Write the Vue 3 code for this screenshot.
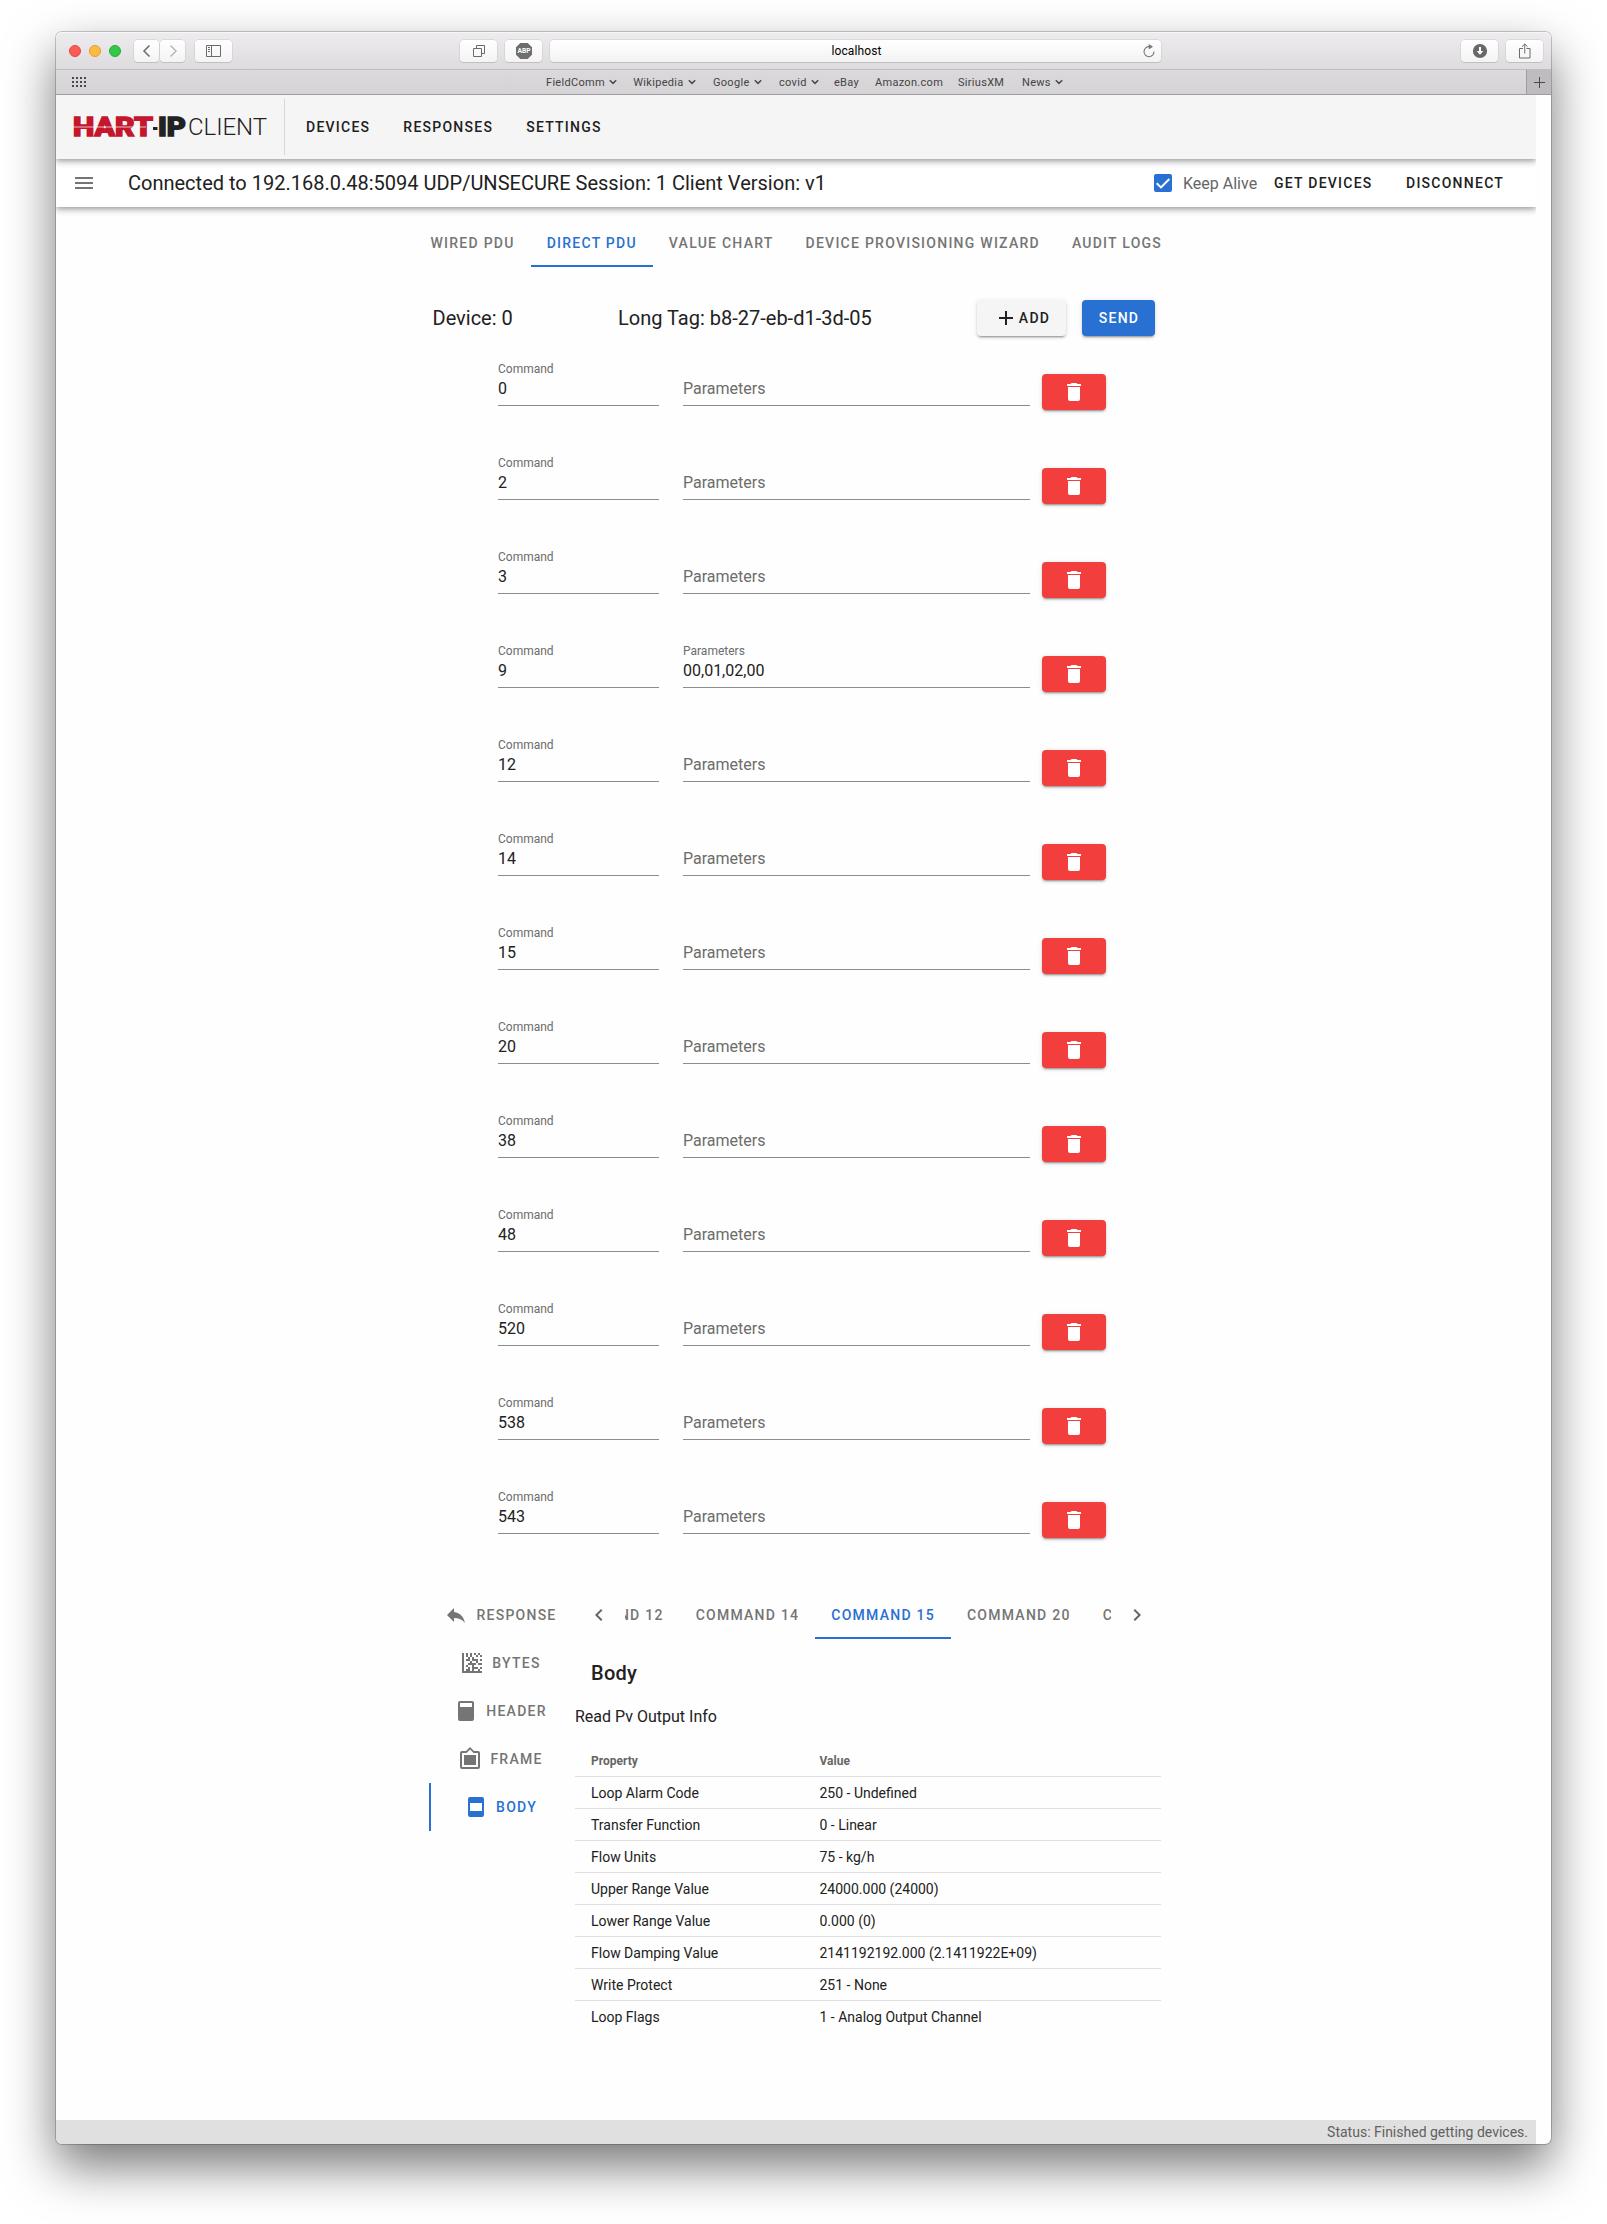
<script setup>
const bookmarks = [
  { label: 'FieldComm', menu: true, w: 87.3 },
  { label: 'Wikipedia', menu: true, w: 79.7 },
  { label: 'Google', menu: true, w: 66 },
  { label: 'covid', menu: true, w: 55 },
  { label: 'eBay', menu: false, w: 41 },
  { label: 'Amazon.com', menu: false, w: 83 },
  { label: 'SiriusXM', menu: false, w: 64 },
  { label: 'News', menu: true, w: 42 },
]
const tabs = ['Wired PDU', 'Direct PDU', 'Value Chart', 'Device Provisioning Wizard', 'Audit Logs']
const rows = [
  ['0', ''], ['2', ''], ['3', ''], ['9', '00,01,02,00'], ['12', ''], ['14', ''], ['15', ''],
  ['20', ''], ['38', ''], ['48', ''], ['520', ''], ['538', ''], ['543', ''],
]
const sections = [
  { label: 'Response', d: 'M10 9V5L3 12l7 7v-4.100c5 0 8.500 1.600 11 5.100-1-5-4-10-11-11z' },
  { label: 'Bytes', d: 'M2 2h2v18h18v2H2zM6 2h2v4H6zM10 2h2v4h-2zM14 2h2v2h-2zM16 4h2v2h-2zM18 2h2v2h-2zM20 4h2v2h-2zM6 8h4v2H6zM8 6h2v2H8zM12 6h2v4h-2zM14 8h4v2h-4zM20 8h2v2h-2zM10 10h2v4h-2zM6 14h2v2H6zM8 12h2v2H8zM12 12h4v2h-4zM16 10h2v2h-2zM18 12h4v2h-4zM6 18h4v2H6zM8 16h2v2H8zM12 14h2v6h-2zM14 16h4v2h-4zM18 18h2v2h-2zM20 16h2v2h-2z' },
  { label: 'Header', d: 'M6 2h12a2 2 0 0 1 2 2v16a2 2 0 0 1-2 2H6a2 2 0 0 1-2-2V4a2 2 0 0 1 2-2M6 4v4h12V4z' },
  { label: 'Frame', d: 'M18 8H6v10h12M20 20H4V6h4.500L12.040 2.500 15.500 6H20M20 4h-4l-4-4-4 4H4a2 2 0 0 0-2 2v14a2 2 0 0 0 2 2h16a2 2 0 0 0 2-2V6a2 2 0 0 0-2-2z' },
  { label: 'Body', d: 'M6 2h12a2 2 0 0 1 2 2v16a2 2 0 0 1-2 2H6a2 2 0 0 1-2-2V4a2 2 0 0 1 2-2M6 8v8h12V8z' },
]
const commands = ['Command 12', 'Command 14', 'Command 15', 'Command 20', 'Command 38']
const properties = [
  ['Loop Alarm Code', '250 - Undefined'],
  ['Transfer Function', '0 - Linear'],
  ['Flow Units', '75 - kg/h'],
  ['Upper Range Value', '24000.000 (24000)'],
  ['Lower Range Value', '0.000 (0)'],
  ['Flow Damping Value', '2141192192.000 (2.1411922E+09)'],
  ['Write Protect', '251 - None'],
  ['Loop Flags', '1 - Analog Output Channel'],
]
</script>

<template>
  <div class="desktop">
    <div class="window">
      <div class="titlebar">
        <i class="light red"></i><i class="light yellow"></i><i class="light green"></i>
        <div class="nav">
          <span class="tb"><svg width="26" height="22" viewBox="0 0 26 22"><path d="M15.500 5.500L10 11l5.500 5.500" fill="none" stroke="#6b6b6b" stroke-width="1.500" /></svg></span>
          <span class="tb"><svg width="26" height="22" viewBox="0 0 26 22"><path d="M10.500 5.500L16 11l-5.500 5.500" fill="none" stroke="#b9b9b9" stroke-width="1.500" /></svg></span>
        </div>
        <span class="tb wide side">
          <svg width="16" height="12" viewBox="0 0 16 12" fill="none" stroke="#6b6b6b"><path d="M.5.500h14v11H.500zM5.500.500v11M2 2.500h2M2 4.500h2M2 6.500h2" /></svg>
        </span>
        <span class="tb wide tiles">
          <svg width="12" height="12" viewBox="0 0 12 12" fill="none" stroke="#6b6b6b"><path d="M.5 3.500h8v8h-8zM3.500 3.500v-3h8v8h-3" /></svg>
        </span>
        <span class="tb wide abp">
          <svg width="18" height="18" viewBox="0 0 18 18"><path d="M5.300 1h7.400L17 5.300v7.400L12.700 17H5.300L1 12.700V5.300z" fill="#6e6e6e" /><text x="9" y="11.400" text-anchor="middle" textLength="13" lengthAdjust="spacingAndGlyphs" font-size="7" font-weight="700" fill="#fff">ABP</text></svg>
        </span>
        <div class="address">
          <span>localhost</span>
          <svg class="reload" width="14" height="14" viewBox="0 0 14 14"><path d="M7.500 2.700A5 5 0 1 0 12 7.500" fill="none" stroke="#777" stroke-width="1.100" /><path d="M6.800 0l4.200 2.800-4.200 2.700z" fill="#777" /></svg>
        </div>
        <span class="tb wide down">
          <svg width="16" height="16" viewBox="0 0 16 16"><circle cx="8" cy="8" r="7.100" fill="#686868" /><path d="M7 4h2v4h2.300L8 11.700 4.700 8H7z" fill="#fff" /></svg>
        </span>
        <span class="tb wide share">
          <svg width="12" height="16" viewBox="0 0 12 16" fill="none" stroke="#6b6b6b"><path d="M4 5.500H.5v9.500h10.500V5.500H7.500M5.750 10.500V1M3 3.700L5.750 1 8.500 3.700" /></svg>
        </span>
      </div>
      <div class="bookbar">
        <svg class="grid" width="15" height="10" viewBox="0 0 15 10" fill="#4a4a4a"><path d="M0 0h2v2H0zM4 0h2v2H4zM8 0h2v2H8zM12 0h2v2h-2zM0 4h2v2H0zM4 4h2v2H4zM8 4h2v2H8zM12 4h2v2h-2zM0 8h2v2H0zM4 8h2v2H4zM8 8h2v2H8zM12 8h2v2h-2z" /></svg>
        <div class="books">
          <span v-for="b in bookmarks" :key="b.label" :style="{ width: b.w + 'px' }">{{ b.label }}<svg v-if="b.menu" width="8" height="6" viewBox="0 0 8 6"><path d="M.8 1.200L4 4.400l3.200-3.200" fill="none" stroke="#4a4a4a" stroke-width="1.500" /></svg></span>
        </div>
        <span class="newtab"><svg width="11" height="11" viewBox="0 0 11 11"><path d="M5.500 0v11M0 5.500h11" stroke="#4a4a4a" /></svg></span>
      </div>

      <div class="page">
        <header class="appbar">
          <svg class="logo" width="114" height="36" viewBox="0 -6 114 36">
            <text x="0" y="21" textLength="80" lengthAdjust="spacingAndGlyphs" fill="#c4162d" stroke="#c4162d">HART</text>
            <rect x="0" y="11.500" width="73" height="1" fill="#f5f5f5" opacity=".75" />
            <rect x="80" y="12" width="4.500" height="3" fill="#222" />
            <text x="85" y="21" textLength="28" lengthAdjust="spacingAndGlyphs" fill="#222" stroke="#222">IP</text>
          </svg>
          <span class="client">CLIENT</span>
          <i class="divider"></i>
          <nav><a>Devices</a><a>Responses</a><a>Settings</a></nav>
        </header>
        <div class="toolbar">
          <svg class="menu" width="18" height="12" viewBox="0 0 18 12"><path d="M0 0h18v2H0zM0 5h18v2H0zM0 10h18v2H0z" fill="#757575" /></svg>
          <span class="status">Connected to 192.168.0.48:5094 UDP/UNSECURE Session: 1 Client Version: v1</span>
          <svg class="check" width="18" height="18" viewBox="0 0 18 18"><rect width="18" height="18" rx="2" fill="#2870d2" /><path d="M2.700 9.200l4.300 4.200 8.300-8.400" fill="none" stroke="#fff" stroke-width="2" /></svg>
          <span class="keep">Keep Alive</span>
          <a class="act get">Get Devices</a>
          <a class="act">Disconnect</a>
        </div>

        <main>
          <div class="tabs">
            <a v-for="t in tabs" :key="t" :class="{ on: t === 'Direct PDU' }">{{ t }}</a>
          </div>
          <div class="device">
            <span class="dev">Device: 0</span>
            <span class="tag">Long Tag: b8-27-eb-d1-3d-05</span>
            <button class="btn add"><svg width="14" height="14" viewBox="0 0 14 14"><path d="M6 0h2v6h6v2H8v6H6V8H0V6h6z" fill="#212121" /></svg>Add</button>
            <button class="btn send">Send</button>
          </div>
          <div class="rows">
            <div v-for="r in rows" :key="r[0]" class="row">
              <div class="field cmd"><label>Command</label><span>{{ r[0] }}</span></div>
              <div class="field par">
                <label>{{ r[1] ? 'Parameters' : '' }}</label>
                <span v-if="r[1]">{{ r[1] }}</span><span v-else class="hint">Parameters</span>
              </div>
              <button class="btn del"><svg width="24" height="24" viewBox="0 0 24 24"><path d="M19 4h-3.500l-1-1h-5l-1 1H5v2h14M6 19a2 2 0 0 0 2 2h8a2 2 0 0 0 2-2V7H6z" fill="#fff" /></svg></button>
            </div>
          </div>

          <div class="result">
            <div class="side-tabs">
              <a v-for="s in sections" :key="s.label" :class="{ on: s.label === 'Body' }">
                <svg width="24" height="24" viewBox="0 0 24 24"><path :d="s.d" fill="currentColor" fill-rule="evenodd" /></svg>{{ s.label }}
              </a>
            </div>
            <div class="detail">
              <div class="cmd-tabs">
                <span class="arrow"><svg width="24" height="24" viewBox="0 0 24 24"><path d="M15.410 16.580L10.830 12l4.580-4.590L14 6l-6 6 6 6z" fill="#666" /></svg></span>
                <div class="strip">
                  <a v-for="c in commands" :key="c" :class="{ on: c === 'Command 15' }">{{ c }}</a>
                </div>
                <span class="arrow"><svg width="24" height="24" viewBox="0 0 24 24"><path d="M8.590 16.580L13.170 12 8.590 7.410 10 6l6 6-6 6z" fill="#666" /></svg></span>
              </div>
              <h2>Body</h2>
              <p>Read Pv Output Info</p>
              <table>
                <thead><tr><th>Property</th><th>Value</th></tr></thead>
                <tbody>
                  <tr v-for="p in properties" :key="p[0]"><td>{{ p[0] }}</td><td>{{ p[1] }}</td></tr>
                </tbody>
              </table>
            </div>
          </div>
        </main>
        <footer>Status: Finished getting devices.</footer>
      </div>
    </div>
  </div>
</template>

<style>
html, body { margin: 0; background: #fff; }
</style>

<style scoped>
* { box-sizing: border-box; }
svg { display: block; flex: none; }
.desktop { width: 1607px; height: 2224px; padding: 32px 56px 0; overflow: hidden; background: #fff; font-family: Roboto, sans-serif; color: #212121; }
.window { width: 1495px; height: 2112px; border-radius: 6px; background: #fefefe; display: flex; flex-direction: column; box-shadow: 0 0 0 1px rgba(0, 0, 0, .2), 0 22px 50px rgba(0, 0, 0, .54); }
.titlebar { height: 38px; display: flex; align-items: center; padding-left: 13px; border-radius: 6px 6px 0 0; background: linear-gradient(#eeecef, #dedbdf); border-bottom: 1px solid #c0bdc1; box-shadow: inset 0 1px #f7f6f7; }
.light { width: 12px; height: 12px; margin-right: 8px; border-radius: 50%; border: 1px solid; }
.red { background: #fc5b57; border-color: #df4744; }
.yellow { background: #fdbc40; border-color: #de9f34; }
.green { background: #34c84a; border-color: #27aa35; }
.nav { display: flex; gap: 1px; margin-left: 5px; }
.tb { width: 25px; height: 22px; display: flex; align-items: center; justify-content: center; border-radius: 4px; background: linear-gradient(#fff, #f4f4f4); box-shadow: 0 0 0 .5px #c9c7ca, 0 1px 0 #b9b7ba; }
.wide { width: 37px; }
.side { margin-left: 10px; }
.tiles { margin-left: 228px; }
.abp { margin-left: 8px; }
.address { position: relative; width: 611px; height: 22px; margin-left: 8px; border-radius: 4px; background: linear-gradient(#fff, #f3f3f3); box-shadow: 0 0 0 .5px #c9c7ca, 0 1px 0 #b9b7ba; display: flex; align-items: center; justify-content: center; font: 12px/22px Roboto, sans-serif; color: #000; }
.address span { padding: 1px 0 0 2px; letter-spacing: .1px; }
.reload { position: absolute; right: 5px; top: 4px; }
.down { margin-left: 300px; }
.share { margin-left: 8px; }
.bookbar { height: 25px; display: flex; align-items: center; background: linear-gradient(#dbd9dc, #d5d3d6); border-bottom: 1px solid #9f9ca0; }
.grid { margin-left: 16px; }
.books { display: flex; margin-left: 459px; width: 923px; font-size: 11px; color: #444; letter-spacing: .3px; white-space: nowrap; }
.books span { display: flex; align-items: center; flex: none; }
.books svg { margin-left: 4px; }
.newtab { margin-left: auto; width: 25px; height: 24px; border-left: 1px solid #9f9ca0; background: #bfbcc0; display: flex; align-items: center; justify-content: center; }
.page { width: 1480px; flex: 1; display: flex; flex-direction: column; overflow: hidden; border-bottom-left-radius: 6px; }
.appbar { position: relative; z-index: 2; height: 64px; flex: none; display: flex; align-items: center; background: #f5f5f5; box-shadow: 0 2px 4px -1px rgba(0, 0, 0, .2), 0 4px 5px rgba(0, 0, 0, .14), 0 1px 10px rgba(0, 0, 0, .12); }
.logo { margin-left: 16.500px; }
.logo text { font: 900 25px Roboto, sans-serif; stroke-width: 1.300; }
.client { margin-left: 1.500px; width: 96px; font-size: 24px; font-weight: 300; letter-spacing: -.05px; }
.divider { width: 1px; height: 56px; background: #d8d8d8; align-self: flex-end; margin-bottom: 4px; }
nav { display: flex; gap: 33px; margin-left: 21px; }
nav a, .act, .tabs a, .side-tabs a, .strip a, .btn { font: 500 14px/20px Roboto, sans-serif; letter-spacing: 1.250px; text-transform: uppercase; white-space: nowrap; }
.toolbar { position: relative; z-index: 1; height: 48px; flex: none; display: flex; align-items: center; background: #fff; box-shadow: 0 2px 4px -1px rgba(0, 0, 0, .2), 0 4px 5px rgba(0, 0, 0, .14), 0 1px 10px rgba(0, 0, 0, .12); }
.menu { margin-left: 19px; }
.status { margin-left: 35px; width: 1025.500px; font-size: 20px; }
.check { margin-right: 11.500px; }
.keep { width: 91px; font-size: 16px; color: #666; }
.get { width: 132px; }
main { width: 734px; margin-left: 373px; flex: 1; padding-top: 12px; }
.tabs { display: flex; height: 48px; margin-left: -14.500px; }
.tabs a, .strip a { height: 48px; flex: none; padding: 0 16px; line-height: 48px; color: #757575; }
.tabs .on, .strip .on { color: #2870d2; border-bottom: 2px solid #2870d2; }
.device { display: flex; align-items: center; height: 36px; margin-top: 33px; padding-left: 3.500px; font-size: 20px; }
.dev { width: 185.500px; }
.tag { width: 359px; }
.btn { height: 36px; padding: 0; border: 0; border-radius: 4px; display: flex; align-items: center; justify-content: center; box-shadow: 0 3px 1px -2px rgba(0, 0, 0, .2), 0 2px 2px rgba(0, 0, 0, .14), 0 1px 5px rgba(0, 0, 0, .12); }
.add { width: 89px; gap: 6px; padding-left: 6px; background: #f5f5f5; color: #212121; }
.send { width: 73px; margin-left: 16px; padding-left: 1px; background: #2870d2; color: #fff; }
.rows { height: 1222px; margin: 25px 0 0 69px; }
.row { display: flex; height: 94px; }
.field { height: 45px; padding-top: 1px; border-bottom: 1px solid #8c8c8c; display: flex; flex-direction: column; }
.field label { height: 14px; flex: none; font-size: 12px; line-height: 14px; color: #6c6c6c; }
.field span { font-size: 16px; line-height: 26px; }
.field .hint { color: #6c6c6c; }
.cmd { width: 161px; }
.par { width: 347px; margin-left: 24px; }
.del { width: 64px; margin: 13px 0 0 12px; background: #f23f3e; }
.result { display: flex; margin-top: 8px; }
.side-tabs { width: 144px; display: flex; flex-direction: column; }
.side-tabs a { height: 48px; display: flex; align-items: center; justify-content: center; gap: 8px; color: #757575; border-left: 2px solid transparent; padding-right: 3px; }
.side-tabs .on { color: #2870d2; border-left-color: #2870d2; }
.detail { width: 590px; }
.cmd-tabs { display: flex; height: 48px; }
.arrow { width: 52px; display: flex; align-items: center; justify-content: center; flex: none; }
.strip { width: 486px; display: flex; overflow: hidden; }
.strip a:first-child { margin-left: -81px; }
h2 { margin: 18px 0 0 18px; font: 500 20px/32px Roboto, sans-serif; letter-spacing: .25px; }
p { margin: 16px 0 0 2px; font-size: 16px; line-height: 24px; }
table { width: 586px; margin: 16px 0 0 2px; border-spacing: 0; table-layout: fixed; text-align: left; }
th, td { height: 32px; padding: 0 16px; border-bottom: 1px solid #e0e0e0; font-size: 14px; line-height: 20px; }
th:first-child { width: 228.500px; }
th { font-size: 12px; font-weight: 700; color: #666; }
tr:last-child td { border-bottom: 0; }
thead tr:last-child th { border-bottom: 1px solid #e0e0e0; }
footer { height: 24px; padding-right: 8px; background: #e0e0e0; color: #616161; font-size: 14px; line-height: 24px; text-align: right; }
</style>
